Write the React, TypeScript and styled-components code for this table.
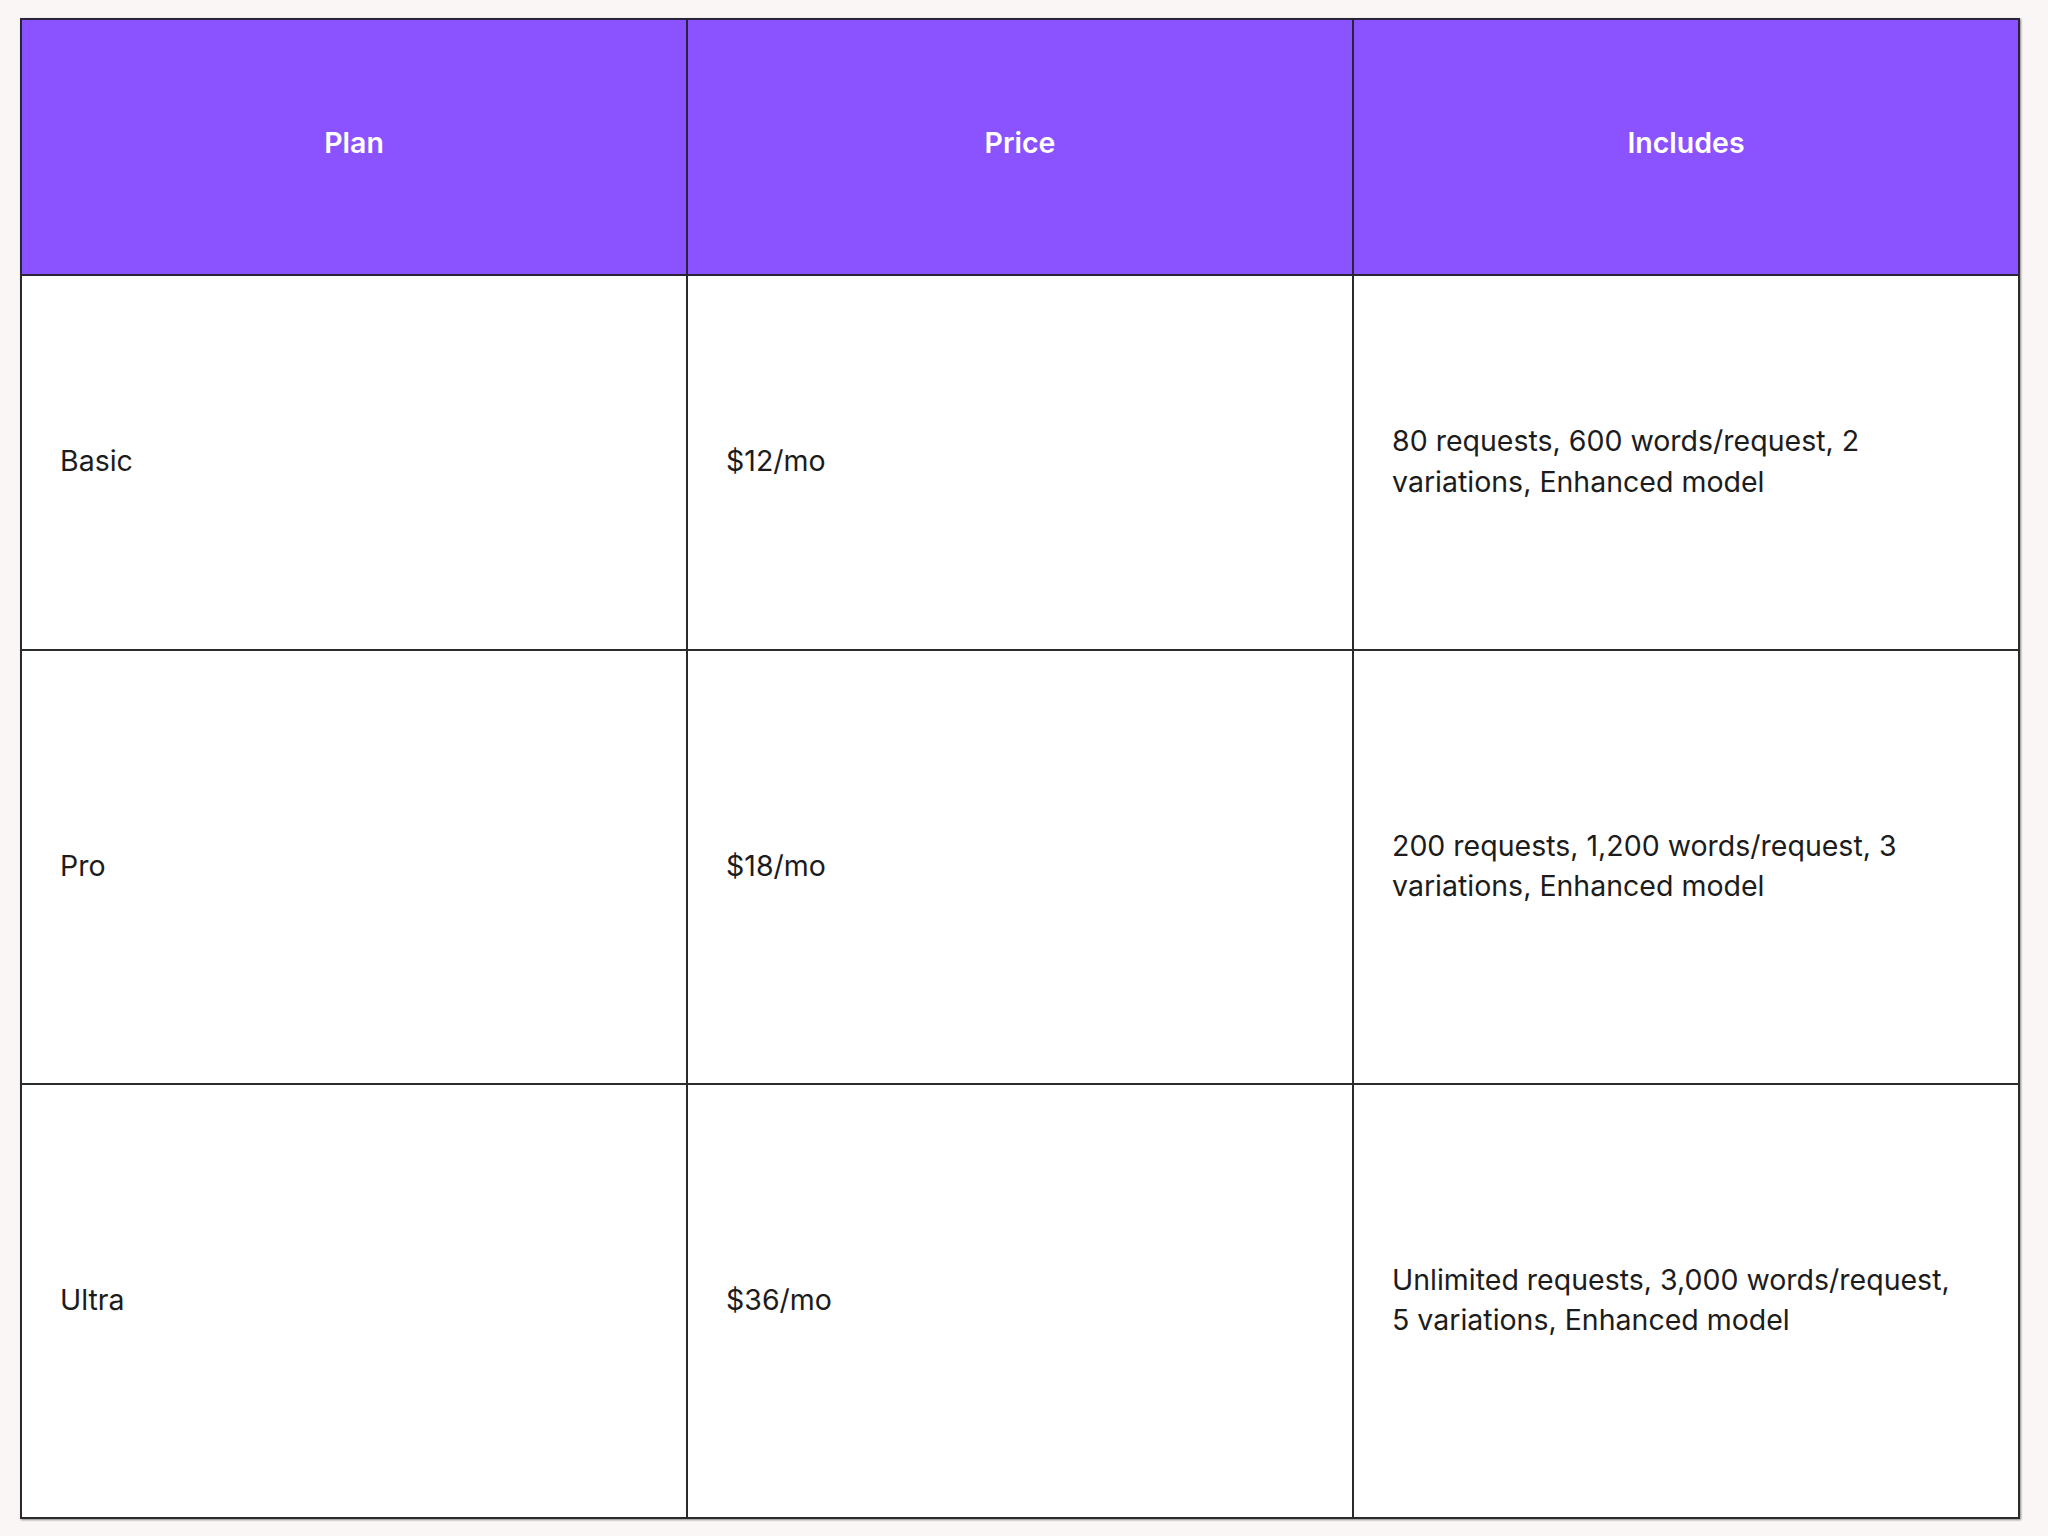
import React from "react";
import styled, { createGlobalStyle } from "styled-components";

const Global = createGlobalStyle`
  html, body {
    margin: 0;
    padding: 0;
    background: #f9f6f5;
  }
  body {
    font-family: "Inter", "Noto Sans", sans-serif;
  }
`;

const Page = styled.div`
  padding: 18px 28px 16px 20px;
  box-sizing: border-box;
  width: 2048px;
  height: 1536px;
`;

const Table = styled.table`
  width: 2000px;
  border-collapse: collapse;
  table-layout: fixed;
  background: #ffffff;
  box-shadow: 1px 1px 2px rgba(0, 0, 0, 0.45);
`;

const HeadRow = styled.tr`
  height: 256px;
  background: #8b53ff;
`;

const Row = styled.tr<{ $h: number }>`
  height: ${(p) => p.$h}px;
`;

const Th = styled.th`
  border: 2px solid #2a2438;
  color: #ffffff;
  font-family: "Inter", "Noto Sans", sans-serif;
  font-size: 28.5px;
  font-weight: 600;
  text-align: center;
  vertical-align: middle;
  padding: 0 40px 10px;
`;

const Td = styled.td`
  border: 2px solid #2b2b2b;
  color: #1c1c1c;
  font-family: "Inter", "Noto Sans", sans-serif;
  font-size: 28.5px;
  line-height: 40.5px;
  font-weight: 400;
  text-align: left;
  vertical-align: middle;
  padding: 0 51px 2px 38px;
`;

const plans = [
  { plan: "Basic", price: "$12/mo", inc: "80 requests, 600 words/request, 2 variations, Enhanced model", h: 375 },
  { plan: "Pro", price: "$18/mo", inc: "200 requests, 1,200 words/request, 3 variations, Enhanced model", h: 434 },
  { plan: "Ultra", price: "$36/mo", inc: "Unlimited requests, 3,000 words/request, 5 variations, Enhanced model", h: 434 },
];

export default function App() {
  return (
    <>
      <Global />
      <Page>
        <Table>
          <thead>
            <HeadRow>
              <Th>Plan</Th>
              <Th>Price</Th>
              <Th>Includes</Th>
            </HeadRow>
          </thead>
          <tbody>
            {plans.map((p) => (
              <Row key={p.plan} $h={p.h}>
                <Td>{p.plan}</Td>
                <Td>{p.price}</Td>
                <Td>{p.inc}</Td>
              </Row>
            ))}
          </tbody>
        </Table>
      </Page>
    </>
  );
}
